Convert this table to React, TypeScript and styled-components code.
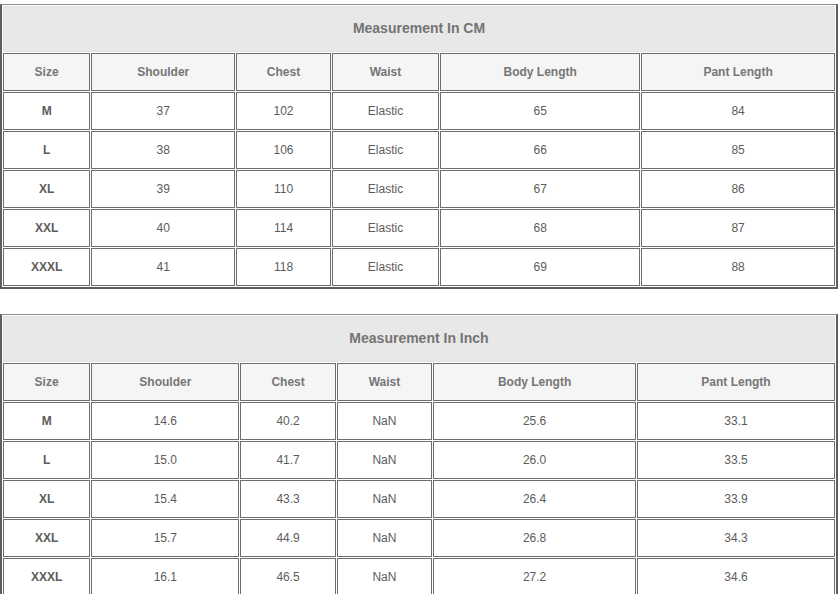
import React from 'react';
import styled, { createGlobalStyle } from 'styled-components';

const GlobalStyle = createGlobalStyle`
  * { box-sizing: border-box; }
  body {
    margin: 0;
    padding-top: 4px;
    background: #ffffff;
    font-family: "Liberation Sans", Arial, sans-serif;
  }
`;

const Page = styled.div`
  display: flex;
  flex-direction: column;
  gap: 25px;
  width: 838px;
`;

const Table = styled.table`
  width: 838px;
  table-layout: fixed;
  border-collapse: separate;
  border-spacing: 1px;
  border-top: 1px solid #8c8c8c;
  border-left: 2px solid #5e5e5e;
  border-right: 2px solid #5e5e5e;
  border-bottom: 2px solid #5e5e5e;
`;

const TitleCell = styled.th`
  height: 46px;
  padding: 0 0 2px;
  background: #e8e8e8;
  border: 1px solid #e2e2e2;
  color: #747474;
  font-size: 14px;
  font-weight: bold;
  text-align: center;
`;

const HeadCell = styled.th`
  height: 38px;
  padding: 0;
  background: #f5f5f5;
  border: 1px solid #6e6e6e;
  color: #767676;
  font-size: 12px;
  font-weight: bold;
  text-align: center;
`;

const Cell = styled.td<{ $bold?: boolean }>`
  height: 38px;
  padding: 0;
  background: #ffffff;
  border: 1px solid #6e6e6e;
  color: #5c5c5c;
  font-size: 12px;
  font-weight: ${({ $bold }) => ($bold ? 'bold' : 'normal')};
  text-align: center;
`;

const headers = ['Size', 'Shoulder', 'Chest', 'Waist', 'Body Length', 'Pant Length'];

interface SizeTable {
  title: string;
  widths: number[];
  rows: string[][];
}

const tables: SizeTable[] = [
  {
    title: 'Measurement In CM',
    widths: [86, 142, 93, 106, 197, 191],
    rows: [
      ['M', '37', '102', 'Elastic', '65', '84'],
      ['L', '38', '106', 'Elastic', '66', '85'],
      ['XL', '39', '110', 'Elastic', '67', '86'],
      ['XXL', '40', '114', 'Elastic', '68', '87'],
      ['XXXL', '41', '118', 'Elastic', '69', '88'],
    ],
  },
  {
    title: 'Measurement In Inch',
    widths: [86, 146, 94, 94, 200, 195],
    rows: [
      ['M', '14.6', '40.2', 'NaN', '25.6', '33.1'],
      ['L', '15.0', '41.7', 'NaN', '26.0', '33.5'],
      ['XL', '15.4', '43.3', 'NaN', '26.4', '33.9'],
      ['XXL', '15.7', '44.9', 'NaN', '26.8', '34.3'],
      ['XXXL', '16.1', '46.5', 'NaN', '27.2', '34.6'],
    ],
  },
];

const App: React.FC = () => {
  return (
    <>
      <GlobalStyle />
      <Page>
        {tables.map((t) => (
          <Table key={t.title}>
            <colgroup>
              {t.widths.map((w, i) => (
                <col key={i} style={{ width: w }} />
              ))}
            </colgroup>
            <thead>
              <tr>
                <TitleCell colSpan={6}>{t.title}</TitleCell>
              </tr>
              <tr>
                {headers.map((h) => (
                  <HeadCell key={h}>{h}</HeadCell>
                ))}
              </tr>
            </thead>
            <tbody>
              {t.rows.map((row) => (
                <tr key={row[0]}>
                  {row.map((v, i) => (
                    <Cell key={i} $bold={i === 0}>
                      {v}
                    </Cell>
                  ))}
                </tr>
              ))}
            </tbody>
          </Table>
        ))}
      </Page>
    </>
  );
};

export default App;
